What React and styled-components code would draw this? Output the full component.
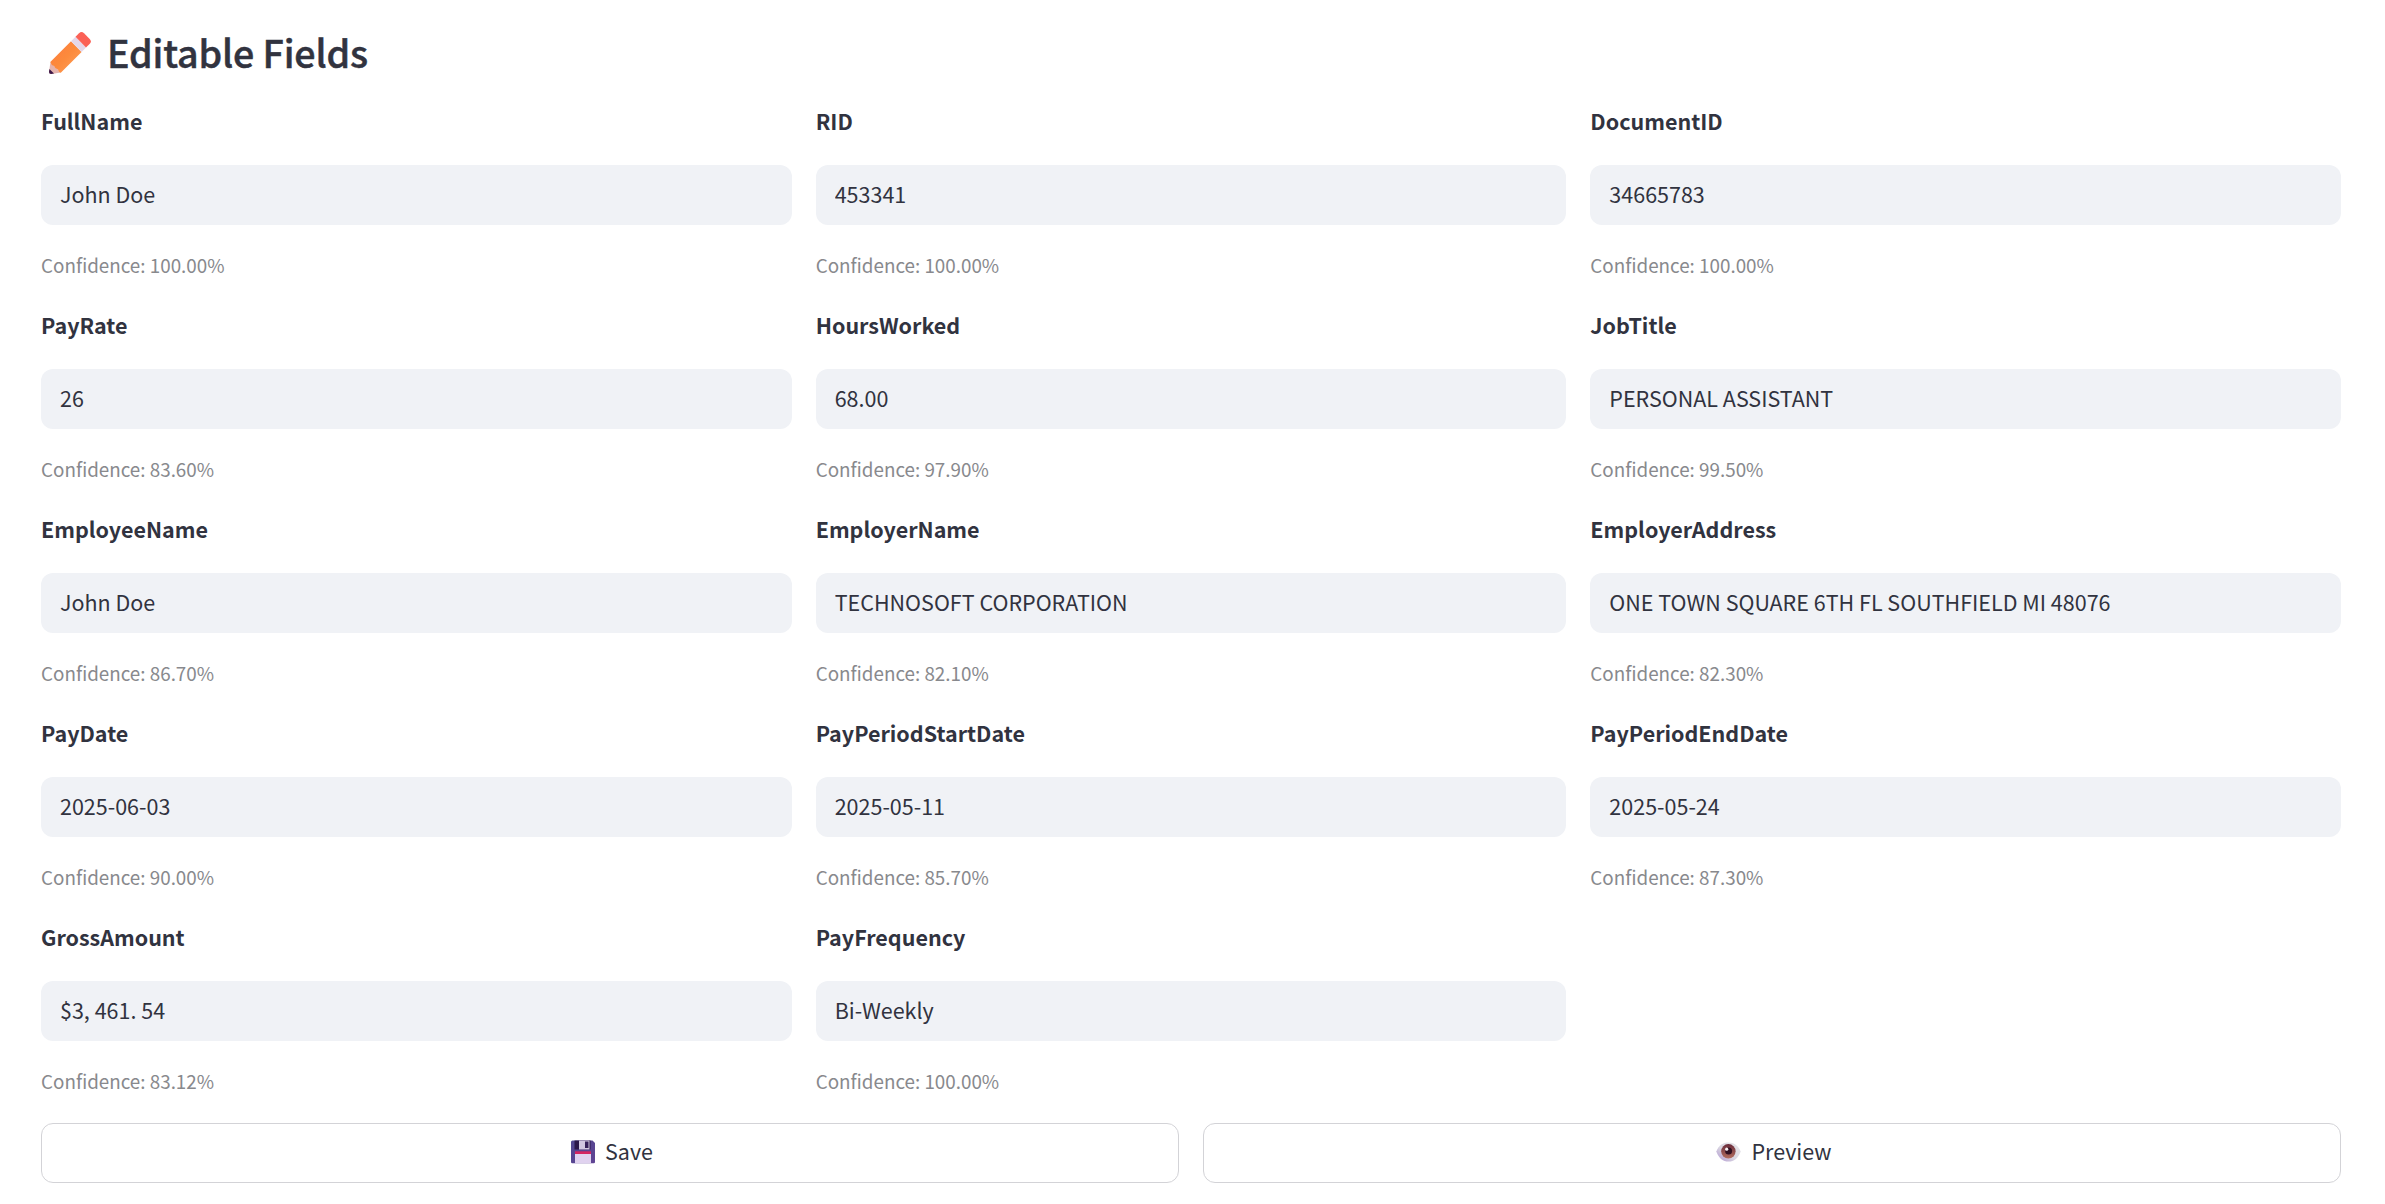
import React from "react";
import styled, { createGlobalStyle } from "styled-components";

const GlobalStyle = createGlobalStyle`
  * { box-sizing: border-box; }
  body {
    margin: 0;
    background: #ffffff;
    color: #31333f;
    font-family: "Noto Sans CJK SC", "Noto Sans", sans-serif;
    font-size: 21.5px;
  }
`;

const Page = styled.main`
  height: 1204px;
  padding: 14px 44px 0 41px;
  overflow: hidden;
`;

const Heading = styled.h2`
  display: flex;
  align-items: flex-start;
  height: 80px;
  margin: 0;
  padding-left: 8px;
  font-size: 37.6px;
  font-weight: 500;
  letter-spacing: -0.14px;
  line-height: 76px;
  white-space: pre;
  -webkit-text-stroke: 0.5px #31333f;

  svg { margin: 18px 16px 0 0; }
`;

const FieldGrid = styled.section`
  display: grid;
  grid-template-columns: repeat(3, 1fr);
  grid-auto-rows: 204px;
  column-gap: 24px;
`;

const Field = styled.div`
  display: flex;
  flex-direction: column;
`;

const Label = styled.label`
  height: 71px;
  padding-top: 9px;
  font-weight: 700;
  line-height: 35px;
`;

const Value = styled.input`
  display: block;
  width: 100%;
  height: 60px;
  padding: 0 19px 3px;
  border: 0;
  border-radius: 12px;
  outline: none;
  background: #f0f2f6;
  color: #31333f;
  font: inherit;
`;

const Confidence = styled.span`
  padding-top: 24px;
  color: #88898d;
  font-size: 18.82px;
  line-height: 32px;
`;

const Actions = styled.div`
  display: grid;
  grid-template-columns: 1fr 1fr;
  gap: 24px;
  margin-top: 9px;
`;

const Button = styled.button`
  display: flex;
  align-items: center;
  justify-content: center;
  height: 60px;
  padding: 0 0 5px 4px;
  border: 1px solid #d3d3d7;
  border-radius: 12px;
  background: #ffffff;
  color: #31333f;
  font: inherit;

  svg { margin: 2px 10px 0 0; }
`;

const PencilIcon = () => (
  <svg width="42" height="42" viewBox="0 0 42 42">
    <defs>
      <linearGradient id="pencil" x1="0" y1="0" x2="1" y2="1">
        <stop offset="0" stopColor="#ff7a3d" />
        <stop offset="0.5" stopColor="#fc8a3c" />
        <stop offset="1" stopColor="#ffa25c" />
      </linearGradient>
    </defs>
    <path d="M1.5 30 L12 40.5 L2.5 42 Q0 42 0 40Z" fill="#e5b3ad" />
    <path d="M0.4 37 L5 41.6 L2 42 Q0 42 0 40Z" fill="#3c1747" />
    <path d="M1.3 30 L22 9.3 L32.6 20 L11.8 40.8 Q9.5 40.3 9 37.6 Q6 37 5.2 34 Q2 33 1.3 30Z" fill="url(#pencil)" />
    <path d="M22 9.3 L26.5 4.8 L37 15.5 L32.6 20Z" fill="#e5d7e9" />
    <path d="M26.5 4.8 L30 1.3 Q32.5 -1 35 1.2 L40.7 7 Q43 9.5 40.8 11.8 L37 15.5Z" fill="#fb6156" />
  </svg>
);

const FloppyIcon = () => (
  <svg width="24" height="24" viewBox="0 0 24 24">
    <defs>
      <linearGradient id="floppy" x1="0" y1="0" x2="1" y2="1">
        <stop offset="0" stopColor="#514790" />
        <stop offset="1" stopColor="#604494" />
      </linearGradient>
    </defs>
    <path d="M1.5 0.5 H21.5 L24 3 V22 Q24 23.3 22.7 23.3 H1.3 Q0 23.3 0 22 V2 Q0 .5 1.5 .5Z" fill="url(#floppy)" />
    <path d="M3.5 .5 H19.5 V9.5 H3.5Z" fill="#2b174a" />
    <path d="M8 .5 H18.5 V9.5 H8Z" fill="#d0c6e0" />
    <path d="M14 1.5 H17.5 V8 H14Z" fill="#35205a" />
    <path d="M4 11.3 H20 V15 H4Z" fill="#d52562" />
    <path d="M4 14 H20 V23.3 H4Z" fill="#e0d2ef" />
  </svg>
);

const EyeIcon = () => (
  <svg width="25" height="20" viewBox="0 0 25 20">
    <defs>
      <linearGradient id="eyeball" x1="0" y1="1" x2="1" y2="0">
        <stop offset="0" stopColor="#b095d0" />
        <stop offset="0.45" stopColor="#d9d6e1" />
        <stop offset="1" stopColor="#e9e9eb" />
      </linearGradient>
      <linearGradient id="iris" x1="0" y1="0" x2="0" y2="1">
        <stop offset="0" stopColor="#6a2c3b" />
        <stop offset="1" stopColor="#b36d5e" />
      </linearGradient>
    </defs>
    <path d="M0.3 9.4 C3 3 7 .5 12.5 .5 C18 .5 22 3.5 24.7 9.4 C22 16.5 18 19.5 12.5 19.5 C7 19.5 3 16.3 .3 9.4Z" fill="url(#eyeball)" />
    <circle cx="12.4" cy="9.3" r="7.2" fill="url(#iris)" />
    <circle cx="12.6" cy="9" r="3.5" fill="#301022" />
    <circle cx="10.7" cy="7.2" r="1.6" fill="#f7eef1" />
  </svg>
);

const fields = [
  ["FullName", "John Doe", "100.00%"],
  ["RID", "453341", "100.00%"],
  ["DocumentID", "34665783", "100.00%"],
  ["PayRate", "26", "83.60%"],
  ["HoursWorked", "68.00", "97.90%"],
  ["JobTitle", "PERSONAL ASSISTANT", "99.50%"],
  ["EmployeeName", "John Doe", "86.70%"],
  ["EmployerName", "TECHNOSOFT CORPORATION", "82.10%"],
  ["EmployerAddress", "ONE TOWN SQUARE 6TH FL SOUTHFIELD MI 48076", "82.30%"],
  ["PayDate", "2025-06-03", "90.00%"],
  ["PayPeriodStartDate", "2025-05-11", "85.70%"],
  ["PayPeriodEndDate", "2025-05-24", "87.30%"],
  ["GrossAmount", "$3, 461. 54", "83.12%"],
  ["PayFrequency", "Bi-Weekly", "100.00%"],
];

export default function App() {
  return (
    <>
      <GlobalStyle />
      <Page>
        <Heading><PencilIcon />Editable Fields</Heading>
        <FieldGrid>
          {fields.map(([name, value, confidence]) => (
            <Field key={name}>
              <Label htmlFor={name}>{name}</Label>
              <Value id={name} defaultValue={value} />
              <Confidence>Confidence: {confidence}</Confidence>
            </Field>
          ))}
        </FieldGrid>
        <Actions>
          <Button><FloppyIcon />Save</Button>
          <Button><EyeIcon />Preview</Button>
        </Actions>
      </Page>
    </>
  );
}
